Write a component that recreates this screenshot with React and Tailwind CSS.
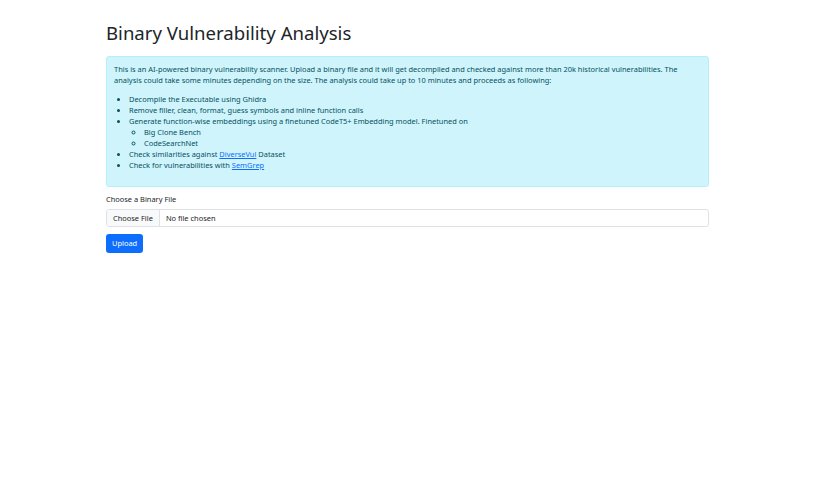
export default function App() {
  return (
    <div className="min-h-[480px] w-[815px] bg-white text-[#212529]" style={{}}>
      <div className="ml-[106px] w-[603px] pt-[19px] font-['Noto_Sans',sans-serif]">
        <h1 className="text-[18.6px] leading-[28px] font-normal text-[#212529] mb-[9px]">Binary Vulnerability Analysis</h1>
        <div className="rounded-[3px] border border-[#b6effb] bg-[#cff4fc] px-[7px] pt-[7px] pb-[7.5px] text-[7.45px] leading-[11.1px] text-[#055160]">
          <p className="mb-[7.5px]">
            This is an AI-powered binary vulnerability scanner. Upload a binary file and it will get decompiled and checked against more than 20k historical vulnerabilities. The analysis could take some minutes depending on the size. The analysis could take up to 10 minutes and proceeds as following:
          </p>
          <ul className="list-disc pl-[15px] mb-[7.5px]">
            <li>Decompile the Executable using Ghidra</li>
            <li>Remove filler, clean, format, guess symbols and inline function calls</li>
            <li>
              Generate function-wise embeddings using a finetuned CodeT5+ Embedding model. Finetuned on
              <ul className="list-[circle] pl-[15px]">
                <li>Big Clone Bench</li>
                <li>CodeSearchNet</li>
              </ul>
            </li>
            <li>Check similarities against <a href="#" className="text-[#0d6efd] underline">DiverseVul</a> Dataset</li>
            <li>Check for vulnerabilities with <a href="#" className="text-[#0d6efd] underline">SemGrep</a></li>
          </ul>
        </div>
        <div className="mt-[7px] text-[7.45px] leading-[11.1px] text-[#212529]">Choose a Binary File</div>
        <div className="mt-[4px] flex h-[18px] items-stretch overflow-hidden rounded-[3px] border border-[#dee2e6] text-[7.45px] text-[#212529]">
          <div className="flex items-center border-r border-[#dee2e6] bg-[#f8f9fa] px-[6px]">Choose File</div>
          <div className="flex items-center px-[6px]">No file chosen</div>
        </div>
        <button className="mt-[7px] h-[19px] rounded-[3px] bg-[#0d6efd] px-[6px] text-[7.45px] text-white">Upload</button>
      </div>
    </div>
  );
}
